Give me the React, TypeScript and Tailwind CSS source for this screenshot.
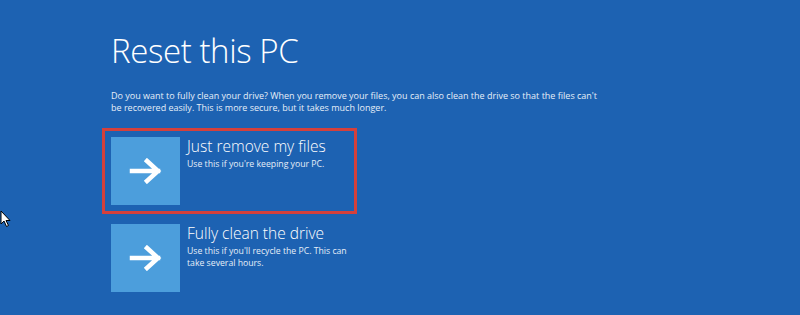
function ArrowIcon() {
  return (
    <svg width="34" height="26" viewBox="0 0 34 26" fill="none">
      <path
        d="M3 13 H29 M18 3 L29 13 L18 23"
        stroke="white"
        strokeWidth="4.5"
        strokeLinecap="square"
        strokeLinejoin="miter"
      />
    </svg>
  );
}

function Option({
  title,
  lines,
  highlighted,
}: {
  title: string;
  lines: string[];
  highlighted?: boolean;
}) {
  return (
    <div
      className={
        highlighted
          ? "ml-[-9px] flex w-[255px] gap-[7px] border-[3px] border-[#d4403c] px-[6px] py-[6px]"
          : "flex w-[255px] gap-[7px] pt-[1px]"
      }
    >
      <div className="flex h-[68px] w-[69px] shrink-0 items-center justify-center bg-[#4c9edc]">
        <ArrowIcon />
      </div>
      <div className="flex flex-col">
        <p className="text-[15.5px] font-light leading-[18px] text-white">{title}</p>
        <div className="mt-[3px] text-[8.7px] leading-[12px] text-[#e6eef8]">
          {lines.map((line) => (
            <p key={line}>{line}</p>
          ))}
        </div>
      </div>
    </div>
  );
}

export default function App() {
  return (
    <div
      className="relative h-[315px] w-[800px] overflow-hidden bg-[#1d62b2]"
      style={{ fontFamily: '"Open Sans", "Noto Sans", sans-serif' }}
    >
      <div className="flex flex-col pl-[111px] pt-[29px]">
        <h1 className="text-[33px] font-light leading-[44px] tracking-[-0.4px] text-white">
          Reset this PC
        </h1>
        <div className="mt-[17px] text-[9px] leading-[12px] text-[#e6eef8]">
          <p>
            Do you want to fully clean your drive? When you remove your files, you can also clean the drive so that the files can't
          </p>
          <p>be recovered easily. This is more secure, but it takes much longer.</p>
        </div>
        <div className="mt-[14px] flex flex-col gap-[9px]">
          <Option
            title="Just remove my files"
            lines={["Use this if you're keeping your PC."]}
            highlighted
          />
          <Option
            title="Fully clean the drive"
            lines={["Use this if you'll recycle the PC. This can", "take several hours."]}
          />
        </div>
      </div>
      <svg
        className="absolute left-0 top-[210px]"
        width="12"
        height="18"
        viewBox="0 0 12 18"
      >
        <path d="M1 1 L1 14 L4 11 L6.5 16.5 L8.5 15.5 L6 10.5 L10 10.5 Z" fill="white" stroke="black" strokeWidth="1" />
      </svg>
    </div>
  );
}
